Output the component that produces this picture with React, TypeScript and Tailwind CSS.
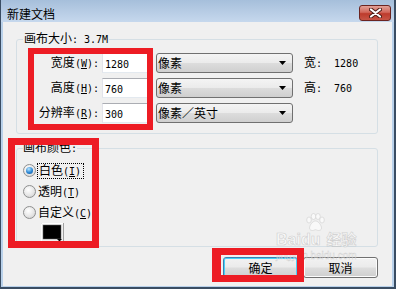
// half-width ASCII in a 6px-advance mono face, like the dialog's bitmap font
const A = ({ children }: { children: React.ReactNode }) => (
  <span className="font-['DejaVu_Sans_Mono',monospace] text-[10px]">{children}</span>
);

const Acc = ({ k }: { k: string }) => (
  <A>
    (<span className="underline">{k}</span>)
  </A>
);

const Combo = ({ text }: { text: string }) => (
  <div className="ml-[6px] flex h-[20px] w-[137px] items-center justify-between rounded-[3px] border border-[#707070] bg-[linear-gradient(#f4f4f4_0%,#ebebeb_48%,#dcdcdc_52%,#cfcfcf_100%)] pl-[1px] pr-[6px] leading-[18px]">
    <span>{text}</span>
    <svg width="7" height="4" viewBox="0 0 7 4">
      <path d="M0 0h7L3.5 4z" fill="#000" />
    </svg>
  </div>
);

const SizeRow = ({
  label,
  value,
  unit,
  extra,
}: {
  label: React.ReactNode;
  value: string;
  unit: string;
  extra?: [string, string];
}) => (
  <div className="flex h-[20px] items-center">
    <div className="w-[82px] text-right leading-[20px]">{label}</div>
    <div className="ml-[3px] h-[20px] w-[48px] border border-[#abadb3] border-r-[#dbdfe6] border-b-[#e3e9ef] border-l-[#e2e3ea] bg-white pl-[2px] leading-[18px]">
      <A>{value}</A>
    </div>
    <Combo text={unit} />
    {extra && (
      <div className="ml-[11px] leading-[20px]">
        {extra[0]}
        <A>: &nbsp;{extra[1]}</A>
      </div>
    )}
  </div>
);

const Radio = ({ checked }: { checked?: boolean }) => (
  <span className="flex h-[13px] w-[13px] shrink-0 items-center justify-center rounded-full border border-[#8e8f8f] bg-[radial-gradient(circle_at_40%_35%,#ffffff,#e6e6e6_55%,#c9c9c9)]">
    {checked && (
      <span className="h-[7px] w-[7px] rounded-full bg-[radial-gradient(circle_at_40%_30%,#b9e6ff,#2a86d4_55%,#0c4f92)]" />
    )}
  </span>
);

const Btn = ({ text, def }: { text: string; def?: boolean }) => (
  <div
    className={
      def
        ? "flex h-[21px] w-[75px] items-center justify-center rounded-[3px] border border-[#3c7fb1] bg-[linear-gradient(#f2f2f2_0%,#ebebeb_48%,#dddddd_52%,#cfcfcf_100%)] shadow-[inset_0_0_0_1px_#48d1f8]"
        : "flex h-[21px] w-[75px] items-center justify-center rounded-[3px] border border-[#707070] bg-[linear-gradient(#f2f2f2_0%,#ebebeb_48%,#dddddd_52%,#cfcfcf_100%)] shadow-[inset_0_0_0_1px_#fcfcfc]"
    }
  >
    {text}
  </div>
);

export default function App() {
  return (
    <div className="relative h-[289px] w-[396px] bg-[#3a4d63] pb-[2px] pl-[1px] pr-[2px] font-['Noto_Sans_CJK_SC','Liberation_Sans',sans-serif] text-[12px] text-black">
      <div className="flex h-full flex-col bg-[#b9d1ea]">
        {/* title bar */}
        <div className="flex h-[25px] items-start justify-between bg-[linear-gradient(#a6bfdb,#c6d8ed)] pl-[6px] pr-[3px]">
          <span className="pt-[6px] leading-[16px]">新建文档</span>
          <div className="mt-[5px] flex h-[16px] w-[32px] items-center justify-center rounded-[3px] border border-[#6b2420] bg-[linear-gradient(#e2a197_0%,#d2675a_45%,#bd3b2c_55%,#c75546_100%)]">
            <svg width="13" height="10" viewBox="0 0 13 10">
              <path d="M2 1.5l9 7M11 1.5l-9 7" stroke="#4a1a14" strokeWidth="4" strokeLinecap="round" />
              <path d="M2 1.5l9 7M11 1.5l-9 7" stroke="#ffffff" strokeWidth="2.2" strokeLinecap="round" />
            </svg>
          </div>
        </div>

        {/* client area */}
        <div className="mx-[2px] mb-[2px] flex flex-1 flex-col bg-[#f0f0f0] pb-[8px] pl-[13px] pr-[14px] pt-[9px]">
          <fieldset className="w-[362px] rounded-[3px] border border-[#d5dfe5]">
            <legend className="ml-[6px] px-[1px] leading-[14px]">
              画布大小<A>: 3.7M</A>
            </legend>
            <div className="flex flex-col gap-[5px] pb-[10px] pt-[6px]">
              <SizeRow label={<>宽度<Acc k="W" /><A>:</A></>} value="1280" unit="像素" extra={["宽", "1280"]} />
              <SizeRow label={<>高度<Acc k="H" /><A>:</A></>} value="760" unit="像素" extra={["高", "760"]} />
              <SizeRow label={<>分辨率<Acc k="R" /><A>:</A></>} value="300" unit="像素／英寸" />
            </div>
          </fieldset>

          <fieldset className="mt-[6px] w-[362px] rounded-[3px] border border-[#d5dfe5]">
            <legend className="ml-[6px] px-[0px] leading-[14px]">
              画布颜色<A>:</A>
            </legend>
            <div className="flex flex-col pb-[4px] pl-[6px] pt-[4px]">
              <div className="flex h-[21px] items-center">
                <Radio checked />
                <span className="ml-[1px] border border-dotted border-black pl-[1px] pr-[2px] leading-[12px]">
                  白色<Acc k="I" />
                </span>
              </div>
              <div className="flex h-[21px] items-center">
                <Radio />
                <span className="ml-[2px] leading-[14px]">
                  透明<Acc k="T" />
                </span>
              </div>
              <div className="flex h-[21px] items-center">
                <Radio />
                <span className="ml-[2px] leading-[14px]">
                  自定义<Acc k="C" />
                </span>
              </div>
              <svg className="ml-[18px]" width="23" height="19" viewBox="0 0 23 19">
                <rect x="0.5" y="0.5" width="22" height="18" fill="#f0f0f0" stroke="#a0a0a0" />
                <path d="M0.5 18V0.5H22" stroke="#ffffff" fill="none" />
                <rect x="2" y="2" width="18" height="14" fill="#000" stroke="#707070" strokeWidth="0.5" />
                <path d="M16 16h5l-2.5 2.5z" fill="#000" />
              </svg>
            </div>
          </fieldset>

          <div className="mt-[10px] flex justify-end gap-[5px]">
            <Btn text="确定" def />
            <Btn text="取消" />
          </div>
        </div>
      </div>

      {/* watermark */}
      <div className="pointer-events-none absolute left-[276px] top-[232px] opacity-60">
        <div className="flex items-end font-['Liberation_Sans','Noto_Sans_CJK_SC',sans-serif] text-[16px] font-bold leading-[16px] text-white [-webkit-text-stroke:0.6px_#b8b8b8]">
          <span>Bai</span>
          <span className="relative">
            <svg className="absolute -top-[19px] left-[4px]" width="20" height="18" viewBox="0 0 20 18">
              <g fill="#ffffff" stroke="#b8b8b8" strokeWidth="0.6">
                <ellipse cx="4" cy="7" rx="2.3" ry="3" />
                <ellipse cx="8.5" cy="3.5" rx="2.3" ry="3" />
                <ellipse cx="13" cy="3.5" rx="2.3" ry="3" />
                <ellipse cx="17" cy="7" rx="2.3" ry="3" />
                <path d="M10.5 8c3 0 6 4.5 6 7 0 2-2 2.5-3 2.5-1.5 0-2-.8-3-.8s-1.5.8-3 .8c-1 0-3-.5-3-2.5 0-2.5 3-7 6-7z" />
              </g>
            </svg>
            du
          </span>
          <span className="ml-[6px] text-[15px]">经验</span>
        </div>
        <div className="mt-[3px] font-['Liberation_Sans',sans-serif] text-[10px] leading-[10px] text-white [-webkit-text-stroke:0.4px_#b8b8b8]">
          jingyan.baidu.com
        </div>
      </div>

      {/* red annotation boxes */}
      <div className="pointer-events-none absolute left-[28px] top-[48px] h-[82px] w-[125px] border-[6px] border-[#ed1c24]" />
      <div className="pointer-events-none absolute left-[8px] top-[138px] h-[110px] w-[91px] border-[7px] border-[#ed1c24]" />
      <div className="pointer-events-none absolute left-[212px] top-[248px] h-[34px] w-[92px] border-[7px] border-l-[9px] border-[#ed1c24]" />
    </div>
  );
}
